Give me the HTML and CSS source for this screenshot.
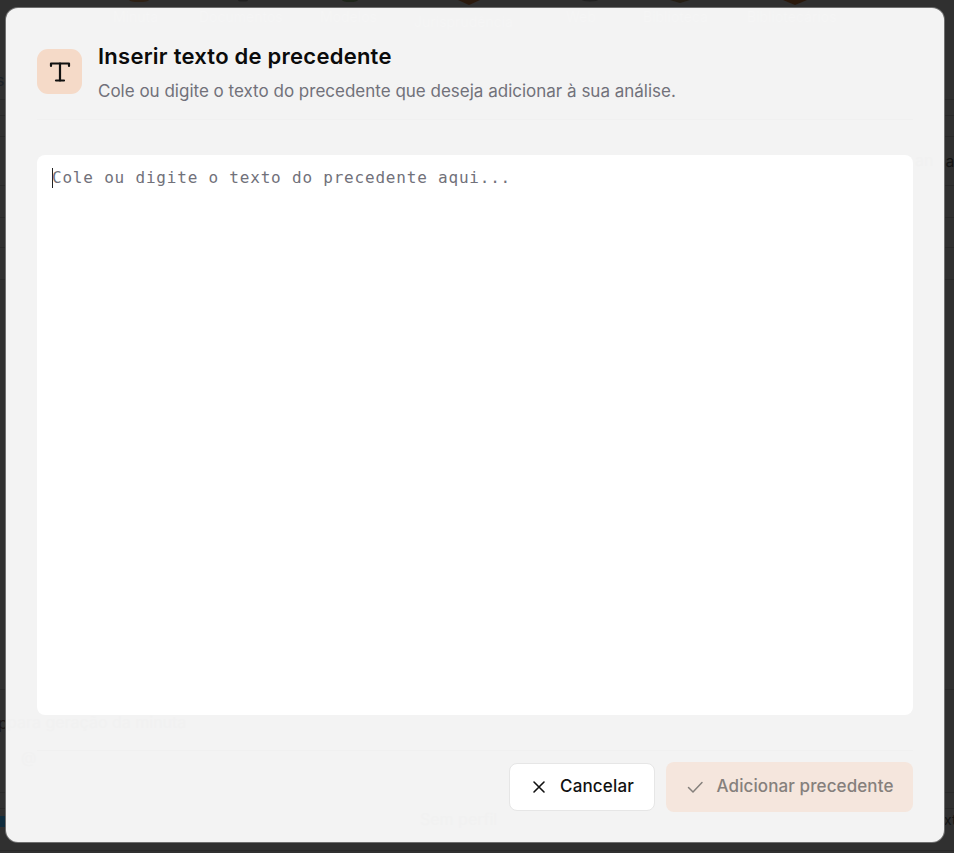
FILE: index.html
```html
<!DOCTYPE html>
<html lang="pt-BR">
<head>
<meta charset="utf-8">
<title>Inserir texto de precedente</title>
<link rel="stylesheet" href="styles.css">
</head>
<body>
<div class="backdrop" aria-hidden="true">
  <svg class="backdrop-art" width="954" height="853" viewBox="0 0 954 853">
    <g stroke="#292929" stroke-width="1">
      <path d="M0 99.5H954M0 115.5H954M0 136.5H954M0 185.5H954M0 217.5H954M0 247.5H954M0 279.5H954M0 689.5H954M0 792.5H954M0 808.5H954M0 850.5H954"/>
    </g>
    <g>
      <ellipse cx="139" cy="0" rx="10" ry="2" fill="#2e2115"/>
      <ellipse cx="243" cy="0" rx="5" ry="1.5" fill="#222"/>
      <ellipse cx="350" cy="0" rx="8" ry="2" fill="#1f261b"/>
      <path d="M458 0H480L469 5Z" fill="#2b1a0e"/>
      <ellipse cx="590" cy="0" rx="8" ry="1.5" fill="#222"/>
      <path d="M670 0H690L680 3Z" fill="#261f15"/>
      <path d="M783 0H807L795 5Z" fill="#2a190c"/>
    </g>
    <rect x="0" y="816" width="6" height="11" fill="#0f2c3d"/>
  </svg>
  <span class="behind behind-s">s</span>
  <span class="behind behind-manual">ua</span>
  <span class="behind behind-p">p</span>
  <span class="behind behind-x">xt</span>
</div>

<main class="modal">
  <div class="ghosts" aria-hidden="true">
    <span class="ghost g-minuta">Minuta</span>
    <span class="ghost g-docs">Documentos</span>
    <span class="ghost g-modelos">Modelos</span>
    <span class="ghost g-juris">Jurisprudência</span>
    <span class="ghost g-web">Web</span>
    <span class="ghost g-bib">Biblioteca</span>
    <span class="ghost g-bibs">Bibliotecários</span>
    <span class="ghost dark g-manual">an</span>
    <span class="ghost dark g-para">para geração da minuta</span>
    <span class="ghost dark g-at">@</span>
    <span class="ghost dark g-perfil">Sem perfil</span>
  </div>

  <header class="head">
    <div class="head-icon">
      <svg width="24" height="24" viewBox="0 0 24 24" fill="none" stroke="#111" stroke-width="2.2" stroke-linecap="round" stroke-linejoin="round">
        <path d="M3 6V3.5h18V6"/>
        <path d="M12 3.5v17"/>
        <path d="M8 20.5h8"/>
      </svg>
    </div>
    <div class="head-text">
      <h1 class="title">Inserir texto de precedente</h1>
      <p class="subtitle">Cole ou digite o texto do precedente que deseja adicionar à sua análise.</p>
    </div>
  </header>

  <div class="editor" role="textbox"><span class="caret"></span><span class="placeholder">Cole ou digite o texto do precedente aqui...</span></div>

  <footer class="foot">
    <button class="btn btn-cancel" type="button">
      <svg width="18" height="18" viewBox="0 0 18 18" fill="none" stroke="#111" stroke-width="1.6" stroke-linecap="round"><path d="M4 4l10 10M14 4L4 14"/></svg>
      Cancelar
    </button>
    <button class="btn btn-add" type="button">
      <svg width="18" height="18" viewBox="0 0 18 18" fill="none" stroke="#85807c" stroke-width="1.5" stroke-linecap="round" stroke-linejoin="round"><path d="M2.5 9.5l4.5 4.5 9-9.5"/></svg>
      Adicionar precedente
    </button>
  </footer>
</main>
</body>
</html>
```

FILE: styles.css
```css
* { box-sizing: border-box; }
html, body { height: 100%; }
body {
  margin: 0;
  height: 853px;
  overflow: hidden;
  background: #303030;
  font-family: Inter, "Noto Sans", sans-serif;
  padding: 8px 10px 11px 6px;
  display: flex;
  position: relative;
}
.backdrop { position: absolute; inset: 0; overflow: hidden; }
.backdrop-art { display: block; }
.behind { position: absolute; font-size: 16px; line-height: 20px; color: #141414; }
.behind-s { left: -4px; top: 70px; color: #1c2228; }
.behind-manual { left: 936px; top: 151px; }
.behind-p { left: -2px; top: 713px; color: #1a1414; }
.behind-x { left: 944px; top: 810px; font-size: 14px; }

.modal {
  position: relative;
  flex: 1;
  display: flex;
  flex-direction: column;
  background: #f3f3f3;
  border-radius: 12px;
  box-shadow: 0 0 0 1px #6f6f6f;
  padding: 41px 31px 30px;
  overflow: hidden;
}

.ghosts { position: absolute; inset: 0; pointer-events: none; }
.ghost { position: absolute; font-size: 14px; line-height: 18px; color: #f5f5f5; white-space: nowrap; }
.ghost.dark { color: #f1f1f1; font-size: 16px; }
.g-minuta { left: 107px; top: 0; }
.g-docs { left: 193px; top: 0; }
.g-modelos { left: 314px; top: 0; }
.g-juris { left: 408px; top: 5px; }
.g-web { left: 560px; top: 0; }
.g-bib { left: 637px; top: 0; }
.g-bibs { left: 741px; top: 0; }
.g-manual { left: 909px; top: 143px; }
.g-para { left: 1px; top: 705px; }
.g-at { left: 15px; top: 740px; }
.g-perfil { left: 414px; top: 802px; }

.head {
  position: relative;
  display: flex;
  gap: 16px;
  padding-bottom: 16px;
  border-bottom: 1px solid #f0f0f0;
}
.head-icon {
  width: 45px;
  height: 45px;
  flex: none;
  border-radius: 11px;
  background: #f5dac8;
  display: flex;
  align-items: center;
  justify-content: center;
}
.head-text { margin-top: -6px; }
.title {
  margin: 0;
  font-size: 22px;
  line-height: 26px;
  letter-spacing: 0.25px;
  font-weight: 600;
  color: #0b0b0b;
}
.subtitle {
  margin: 10px 0 0;
  font-size: 17px;
  line-height: 24px;
  color: #71717a;
}

.editor {
  position: relative;
  flex: 1;
  margin-top: 35px;
  background: #fff;
  border-radius: 8px;
  padding: 13px 15px 12px;
  font-family: "DejaVu Sans Mono", monospace;
  font-size: 16px;
  line-height: 20px;
  letter-spacing: 0.8px;
  color: #71717a;
  display: flex;
  align-items: flex-start;
}
.caret { width: 1px; height: 20px; background: #222; flex: none; margin-right: -1px; }

.foot {
  position: relative;
  display: flex;
  justify-content: flex-end;
  align-items: center;
  gap: 11px;
  margin-top: 35px;
  padding-top: 11px;
  border-top: 1px solid #f0f0f0;
}
.btn {
  display: flex;
  align-items: center;
  font-family: inherit;
  font-size: 17px;
  font-weight: 500;
  border-radius: 8px;
  padding-bottom: 4px;
}
.btn svg { margin-top: 3px; }
.btn-cancel {
  width: 146px;
  height: 48px;
  gap: 12px;
  justify-content: center;
  background: #fff;
  color: #111;
  border: 1px solid #e6e6e6;
  letter-spacing: 0.15px;
}
.btn-add {
  width: 247px;
  height: 50px;
  gap: 13px;
  justify-content: center;
  background: #f5e6dd;
  color: #85807c;
  border: 0;
  letter-spacing: 0.1px;
}
```
